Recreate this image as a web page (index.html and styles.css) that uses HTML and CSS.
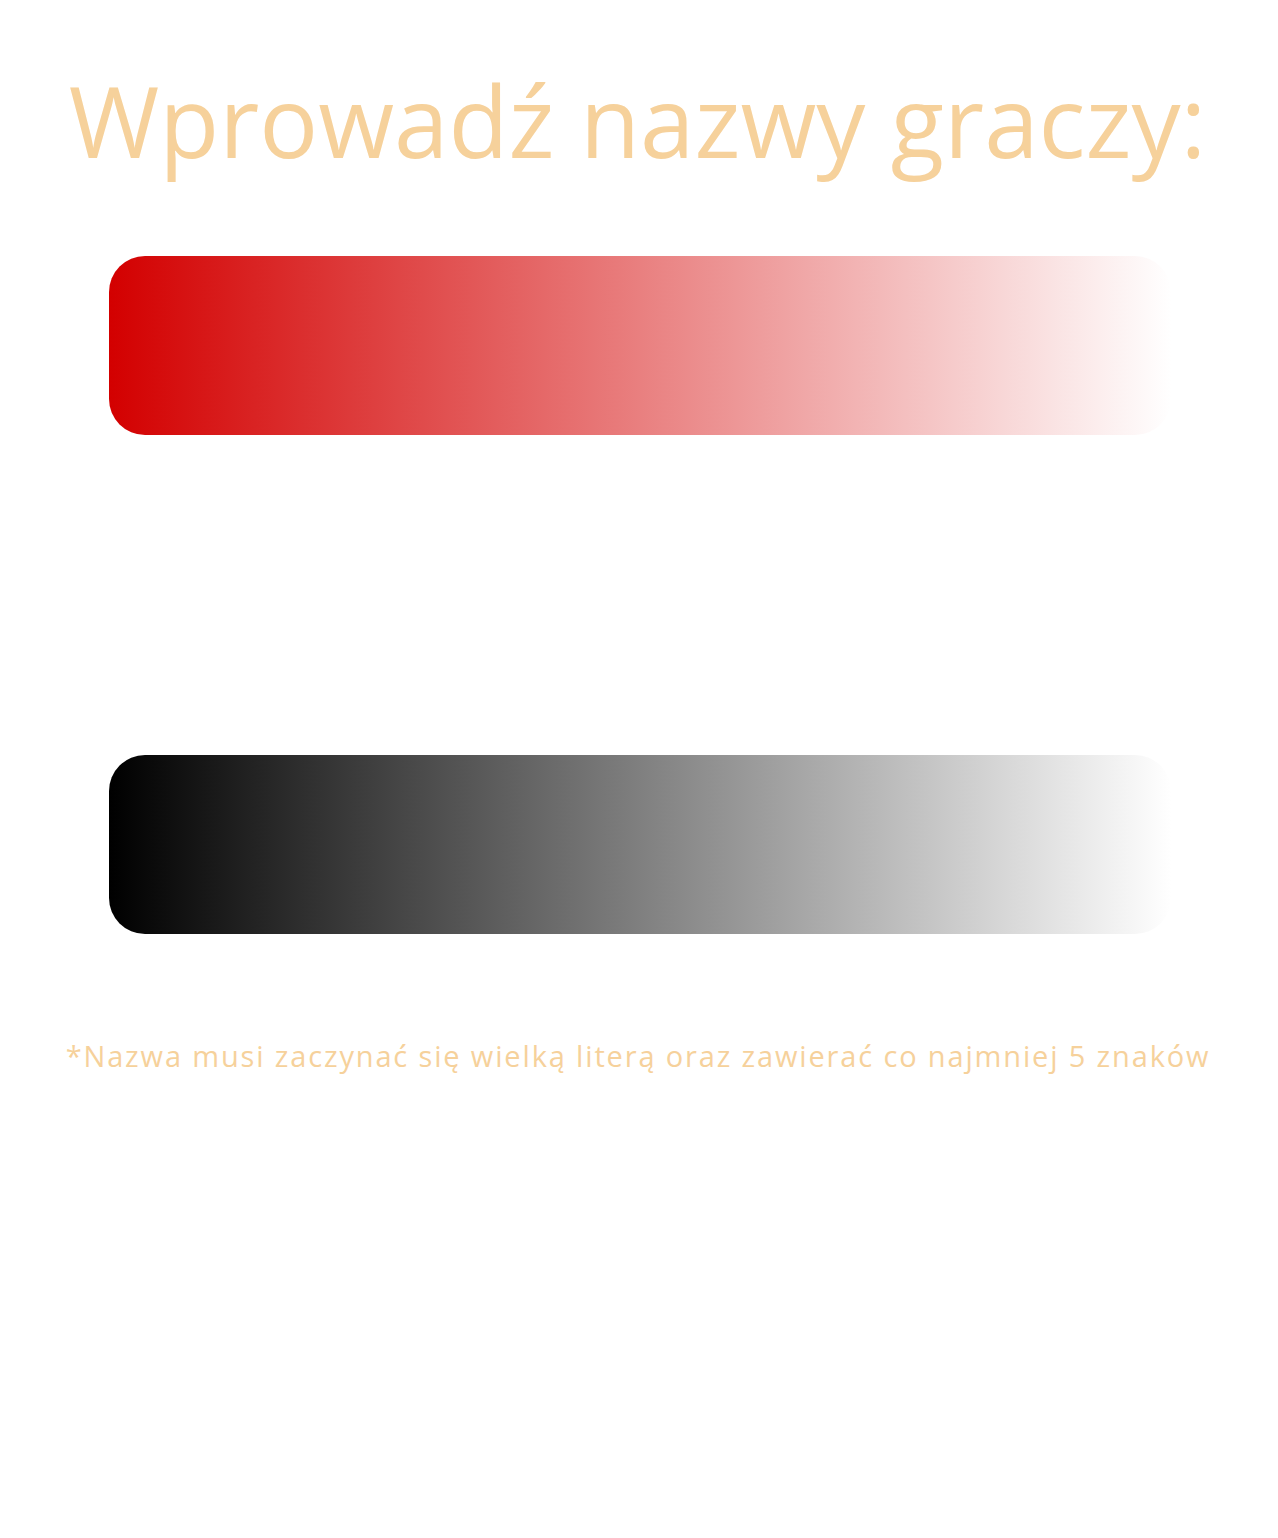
FILE: index.html
```html
<!DOCTYPE html>
<html lang="pl">
<head>
<meta charset="utf-8">
<title>Gracze</title>
<link rel="stylesheet" href="styles.css">
</head>
<body>
<main class="page">
  <h1 class="title">Wprowadź nazwy graczy:</h1>
  <div class="players">
    <input class="player player-red" type="text" aria-label="Gracz 1">
    <input class="player player-black" type="text" aria-label="Gracz 2">
  </div>
  <p class="hint">*Nazwa musi zaczynać się wielką literą oraz zawierać co najmniej 5 znaków</p>
</main>
</body>
</html>
```
FILE: styles.css
```css
html, body {
  margin: 0;
  padding: 0;
  background: #ffffff;
}
.page {
  width: 1278px;
  min-height: 1538px;
  display: flex;
  flex-direction: column;
  align-items: center;
  font-family: "Open Sans", "Noto Sans", sans-serif;
  color: #f6d19b;
}
.title {
  margin: 60px 0 0;
  height: 122px;
  padding-right: 3px;
  font-size: 98px;
  font-weight: 400;
  line-height: 120px;
  letter-spacing: 0;
  white-space: nowrap;
}
.players {
  margin-top: 74px;
  display: flex;
  flex-direction: column;
  gap: 320px;
  padding-left: 1px;
}
.player {
  box-sizing: border-box;
  width: 1062px;
  height: 179px;
  border: 0;
  border-radius: 36px;
  outline: none;
}
.player-red {
  background: linear-gradient(to right, #d30000, #ffffff);
}
.player-black {
  background: linear-gradient(to right, #000000, #ffffff);
}
.hint {
  margin: 104px 0 0;
  padding-right: 2px;
  font-size: 29px;
  line-height: 36px;
  letter-spacing: 1.85px;
  white-space: nowrap;
}
```
